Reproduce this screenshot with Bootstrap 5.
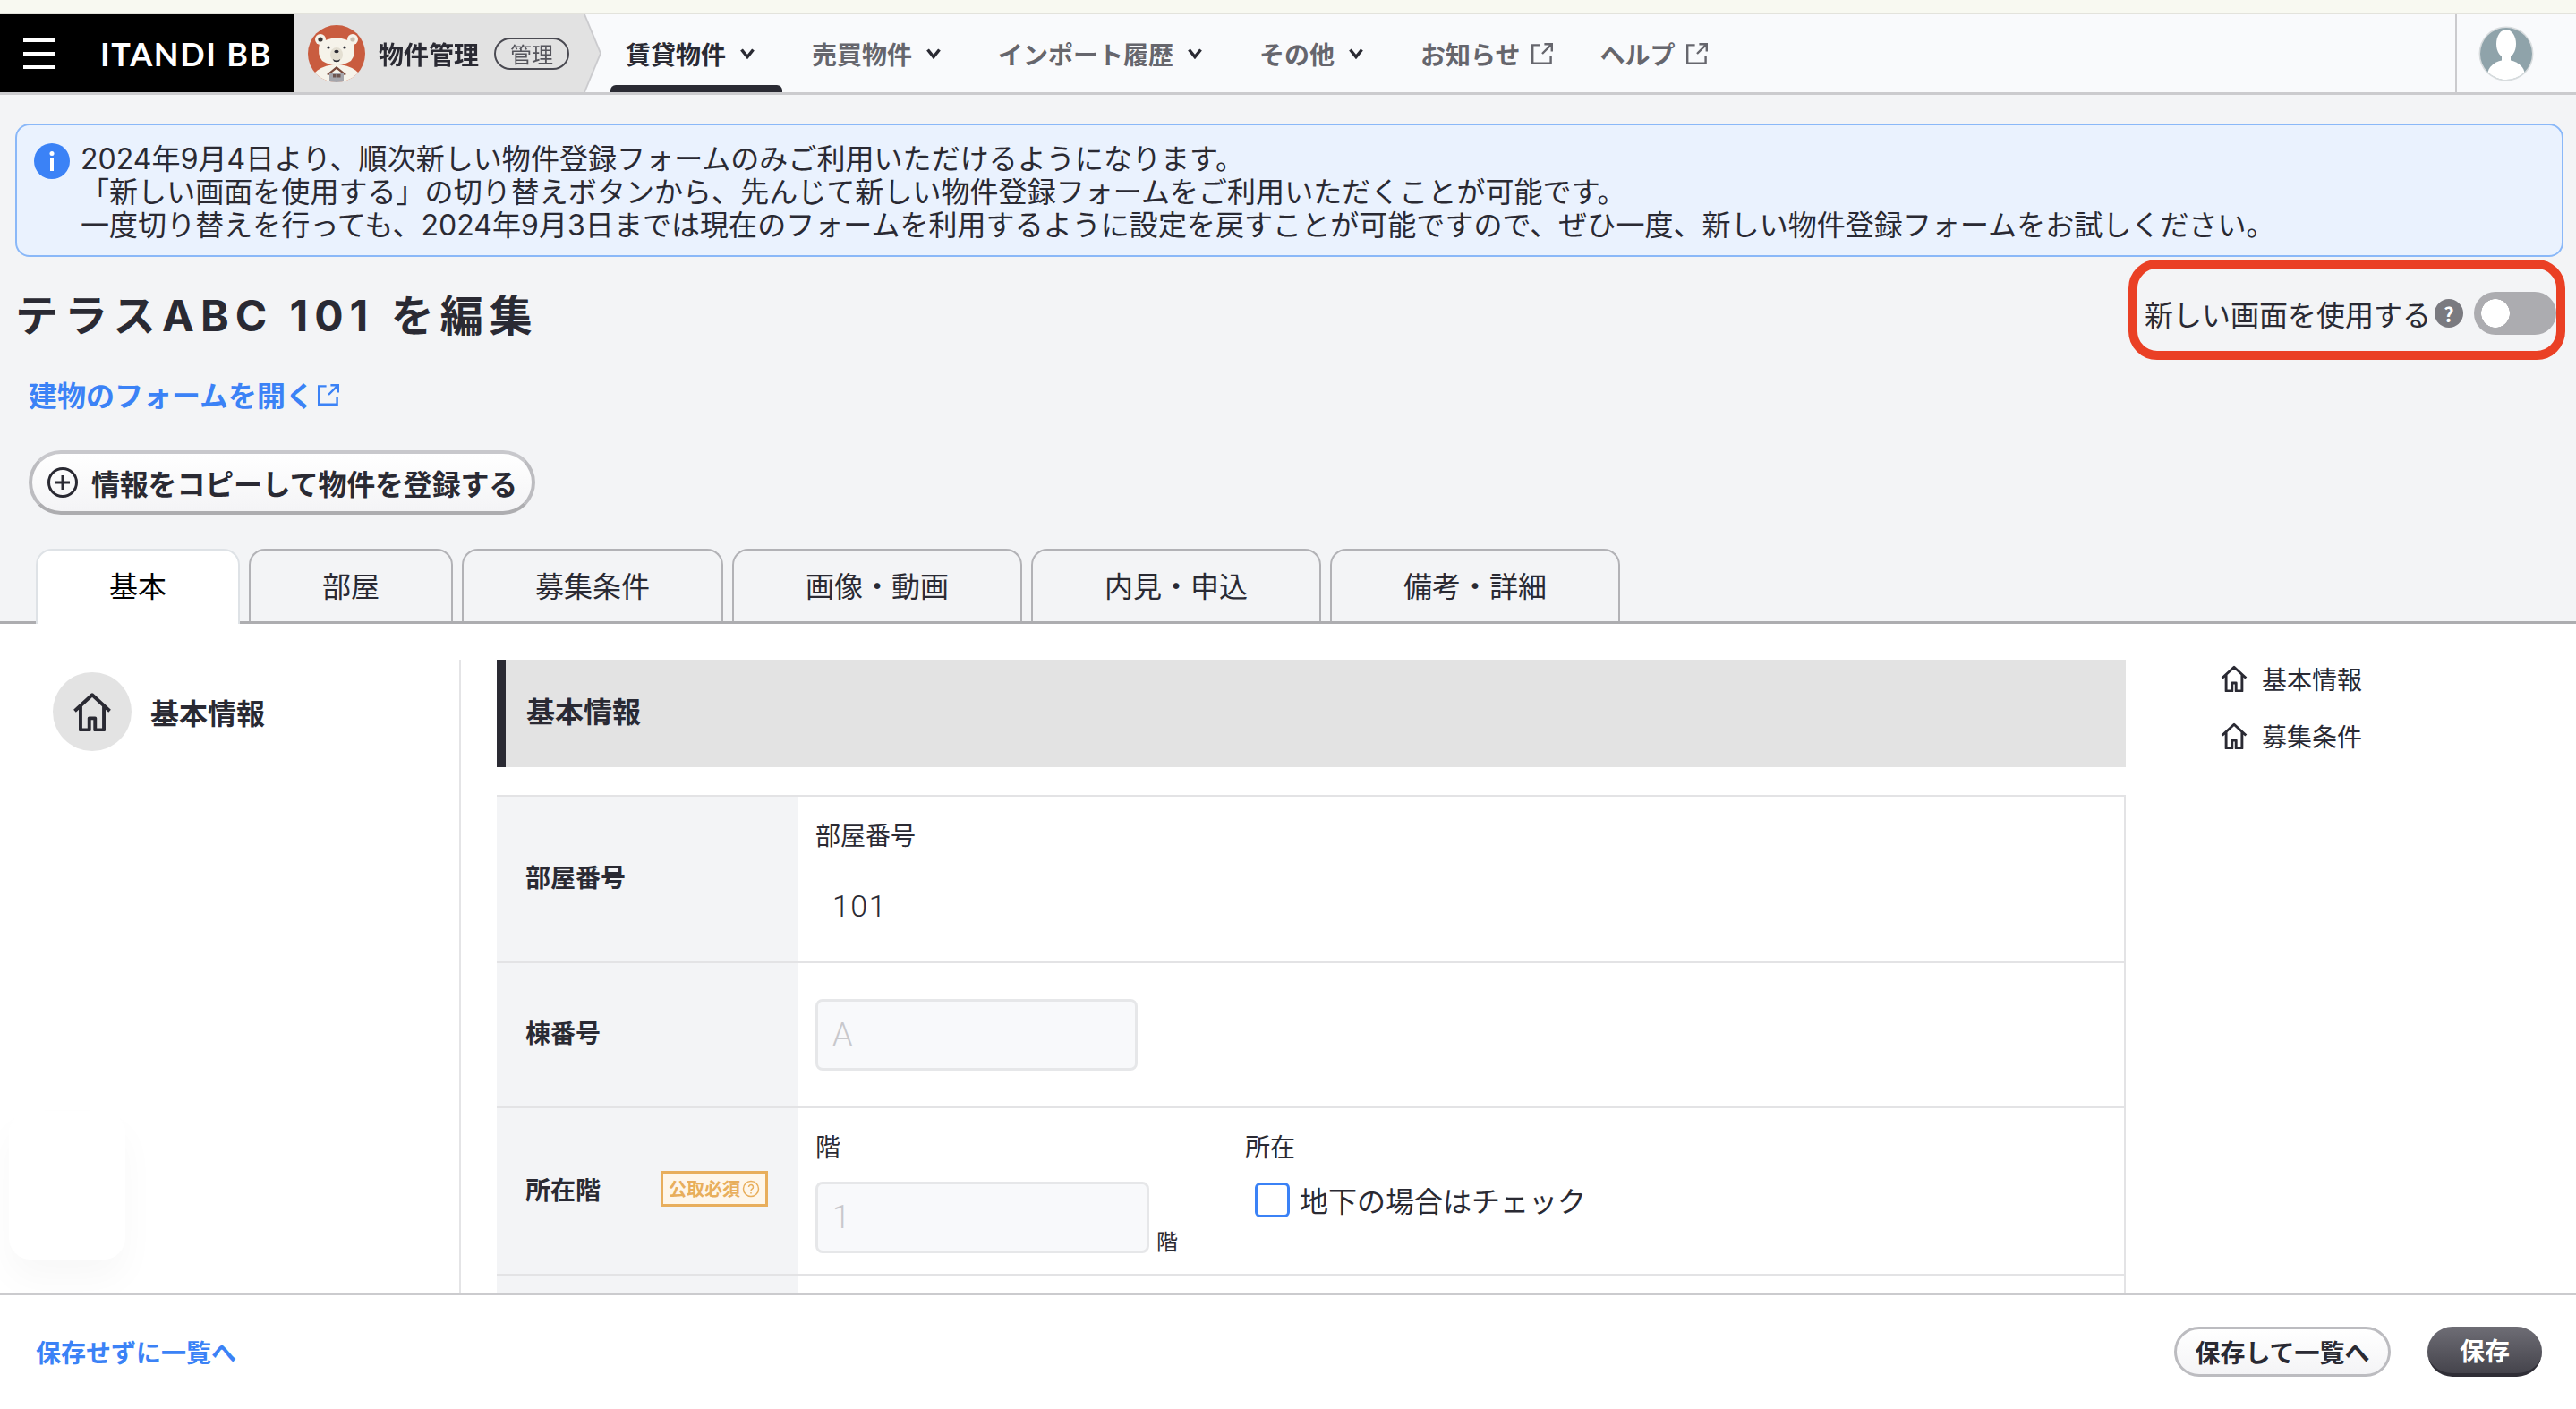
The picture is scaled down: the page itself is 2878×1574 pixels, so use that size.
<!DOCTYPE html>
<html lang="ja">
<head>
    <meta charset="UTF-8">
    <meta name="viewport" content="width=device-width, initial-scale=1.0">
    <title>テラスABC 101 を編集</title>
    <link href="https://cdn.jsdelivr.net/npm/bootstrap@5.3.0/dist/css/bootstrap.min.css" rel="stylesheet" crossorigin="anonymous">
    <style>
        /* Page shell */
        html, body { height: 100%; }
        body {
            font-family: "Noto Sans CJK JP", "Noto Sans", sans-serif;
            background-color: #f3f4f6;
            color: #2a2a33;
            font-size: 32px;
            overflow: hidden;
        }
        .top-strip { height: 16px; background-color: #f8f9f1; border-bottom: 2px solid #e3e3dc; }

        /* Global header */
        .app-nav { height: 90px; background-color: #f9fafc; border-bottom: 3px solid #cbcbce; padding: 0; flex-wrap: nowrap; align-items: stretch; justify-content: flex-start; }
        .brand-block { width: 328px; background-color: #000; color: #fff; padding-left: 26px; }
        .burger { width: 36px; margin-right: 50px; }
        .burger span { display: block; height: 4px; background-color: #fff; margin-bottom: 11px; }
        .burger span:last-child { margin-bottom: 0; }
        .brand-name { font-family: "Lato", sans-serif; font-size: 36px; font-weight: 700; letter-spacing: 1.7px; line-height: 1; margin: 0; padding: 0; color: #fff; }
        .tile-wrap { width: 342px; filter: drop-shadow(2px 0 0 #cbcbce); }
        .app-tile { height: 100%; background-color: #e2e2e2; clip-path: polygon(0 0, 324px 0, 342px 50%, 324px 100%, 0 100%); padding-left: 16px; }
        .bear { width: 64px; height: 64px; margin-right: 15px; }
        .app-name { font-size: 28px; font-weight: 700; line-height: 1; }
        .app-badge { font-size: 24px; line-height: 1; color: #55555c; border: 2px solid #4a4a52; border-radius: 18px; width: 84px; height: 36px; margin-left: 17px; }
        .main-menu { margin-left: 12px; gap: 16px; }
        .main-menu .nav-link { height: 100%; display: flex; align-items: center; font-size: 28px; font-weight: 700; color: #66666d; padding: 0 31px 0 17px; line-height: 1; position: relative; }
        .main-menu .nav-link.active { color: #2a2a33; }
        .main-menu .nav-link.active::after { content: ""; position: absolute; left: 0; right: 0; bottom: 0; height: 8px; background-color: #2a2a33; border-radius: 6px 6px 0 0; }
        .main-menu .nav-link.ext { padding-right: 20px; }
        .chev { width: 16px; height: 12px; margin-left: 16px; }
        .ext-icon { width: 24px; height: 24px; margin-left: 12px; }
        .user-area { margin-left: auto; width: 135px; border-left: 2px solid #cbcbce; padding-left: 24px; }
        .user-area svg { width: 62px; height: 64px; }

        /* Notice */
        .notice { margin: 32px 14px 0 17px; padding: 19px 30px 14px 19px; background-color: #eaf2fe; border: 2px solid #8ab8f8; border-radius: 16px; color: #2a2a33; font-family: "Inter", "Noto Sans CJK JP", sans-serif; line-height: 37px; font-size: 32px; letter-spacing: .05px; gap: 12px; height: 149px; }
        .notice svg { width: 40px; height: 40px; flex-shrink: 0; margin-top: 1px; }

        /* Title area */
        .title-row { margin-top: 40px; padding: 0 22px 0 17px; height: 56px; }
        .page-title { font-family: "Inter", "Noto Sans CJK JP", sans-serif; font-size: 48px; font-weight: 700; letter-spacing: 7px; line-height: 50px; margin: 0 0 4px; }
        .toggle-group { margin-bottom: 10px; }
        .toggle-group .label { line-height: 48px; }
        .help-dot { width: 32px; height: 32px; border-radius: 50%; background-color: #7a7a80; color: #fff; font-size: 22px; font-weight: 700; line-height: 32px; text-align: center; margin: 0 12px 0 4px; }
        .toggle-group .form-switch { padding: 0; margin: 0; min-height: 0; height: 48px; }
        .toggle-group .form-check-input { width: 92px; height: 48px; margin: 0; border: 0; background-color: #acacb0; background-size: auto; background-position: 0 0; background-image: radial-gradient(circle 16px at 24px 24px, #fff 15.5px, transparent 16px); }
        .red-frame { position: absolute; right: 12px; top: -37px; width: 488px; height: 112px; border: 10px solid #ea4025; border-radius: 32px; pointer-events: none; }
        .link-line { height: 40px; margin-top: 37px; padding-left: 32px; }
        .bldg-link { font-weight: 700; color: #3b82f6; text-decoration: none; }
        .bldg-link svg { width: 24px; height: 24px; margin-left: 4px; margin-top: -8px; }
        .copy-btn { margin: 43px 0 0 32px; height: 72px; width: 566px; border: 4px solid #bcbcc0; border-top-color: #c8c8cc; border-bottom-color: #adadb0; border-radius: 36px; background: linear-gradient(#fff, #f4f4f6); font-size: 32px; font-weight: 700; letter-spacing: -.2px; color: #2a2a33; padding: 0 0 0 16px; gap: 14px; }
        .copy-btn svg { width: 36px; height: 36px; }

        /* Tabs */
        .edit-tabs { margin-top: 38px; padding-left: 40px; gap: 10px; border-bottom: 3px solid #adadb0; flex-wrap: nowrap; }
        .edit-tabs .nav-link { height: 81px; margin-bottom: -3px; padding: 0 80px 4px; display: flex; align-items: center; font-size: 32px; line-height: 1; color: #2a2a33; background-color: #f3f4f6; border: 2px solid #b2b2b6; border-bottom: 0; border-radius: 18px 18px 0 0; }
        .edit-tabs .nav-link.active { background-color: #fff; height: 84px; padding-bottom: 7px; }

        /* Form body */
        .form-area { flex: 1 1 0; min-height: 0; background-color: #fff; padding-top: 40px; overflow: hidden; position: relative; }
        .side-menu { width: 515px; flex-shrink: 0; border-right: 2px solid #e4e4e6; padding: 14px 0 0 59px; }
        .side-menu .round { width: 88px; height: 88px; border-radius: 50%; background-color: #e3e3e3; margin-right: 21px; }
        .side-menu .round svg { width: 44px; height: 44px; }
        .side-item { font-weight: 700; font-size: 32px; }
        .float-card { position: absolute; left: 10px; top: 544px; width: 130px; height: 166px; border-radius: 24px; background-color: #fff; box-shadow: 0 22px 40px rgba(0,0,0,.03); }
        .form-main { width: 1820px; margin-left: 40px; flex-shrink: 0; }
        .section-head { height: 120px; background-color: #e3e3e3; border-left: 10px solid #2a2a33; padding: 0 0 8px 23px; font-weight: 700; font-size: 32px; margin-bottom: 31px; }
        .form-line { display: flex; border-top: 2px solid #e3e3e5; border-right: 2px solid #e3e3e5; }
        .form-line.h-room { height: 186px; }
        .form-line.h-bldg { height: 162px; }
        .form-line.h-floor { height: 187px; }
        .form-line.h-rest { height: 60px; }
        .line-label { width: 336px; flex-shrink: 0; background-color: #f3f4f6; padding: 0 33px 6px 32px; font-size: 28px; font-weight: 700; }
        .line-body { flex: 1; padding-left: 20px; }
        .field-label { font-size: 28px; line-height: 40px; }
        .pad-top { padding-top: 22px; }
        .value-plain { font-family: "Roboto", sans-serif; font-size: 34px; font-weight: 300; letter-spacing: 1.5px; line-height: 44px; padding: 0 0 0 19px; margin-top: 38px; color: #2a2a33; }
        .soft-input { height: 80px; border: 3px solid #e6e7e9; border-radius: 8px; font-family: "Roboto", sans-serif; font-size: 36px; font-weight: 300; padding: 0 16px; }
        .soft-input:disabled { background-color: #f8f9fb; }
        .soft-input::placeholder { color: #c8c8cc; }
        .w-bldg { width: 360px; }
        .w-floor { width: 373px; }
        .floor-group { width: 480px; }
        .unit { font-size: 24px; margin-left: 8px; line-height: 1; padding-bottom: 2px; }
        .req-badge { width: 120px; height: 40px; border: 3px solid #e8ae5c; background-color: #fef6ea; color: #e8ae5c; font-size: 20px; font-weight: 700; line-height: 1; gap: 2px; }
        .req-badge svg { width: 20px; height: 20px; }
        .check-row { margin: 21px 0 0 11px; gap: 11px; padding: 0; min-height: 0; }
        .check-row .form-check-input { float: none; width: 39px; height: 39px; margin: 0; border: 3px solid #3b82f6; border-radius: 6px; }
        .check-row label { line-height: 39px; }
        .right-menu { margin-left: 106px; margin-top: -11px; font-size: 28px; }
        .right-menu .item { height: 64px; gap: 16px; }
        .right-menu svg { width: 30px; height: 30px; }

        /* Footer */
        .page-foot { height: 130px; flex-shrink: 0; background-color: #fff; border-top: 3px solid #cbcbce; padding: 0 38px 2px 40px; position: relative; }
        .back-link { font-size: 28px; font-weight: 700; color: #3b82f6; text-decoration: none; }
        .foot-btn { height: 56px; border-radius: 28px; font-size: 28px; font-weight: 700; line-height: 1; padding: 0; }
        .foot-btn.light { width: 242px; border: 3px solid #bcbcc0; background: linear-gradient(#fff, #f4f4f6); color: #2a2a33; }
        .foot-btn.dark { width: 128px; margin-left: 41px; border: 0; border-bottom: 4px solid #2f2e36; background: linear-gradient(#6e6d75, #45444c); color: #fff; }
    </style>
</head>
<body class="d-flex flex-column">
    <div class="top-strip"></div>

    <!-- Global header -->
    <nav class="navbar app-nav">
        <div class="brand-block d-flex align-items-center">
            <div class="burger"><span></span><span></span><span></span></div>
            <a class="navbar-brand brand-name" href="#">ITANDI BB</a>
        </div>
        <div class="tile-wrap">
            <div class="app-tile d-flex align-items-center">
                <svg class="bear" viewBox="0 0 64 64">
                    <defs><clipPath id="bearClip"><circle cx="32" cy="32" r="32"/></clipPath></defs>
                    <g clip-path="url(#bearClip)">
                        <rect width="64" height="64" fill="#c95c3f"/>
                        <ellipse cx="32" cy="66" rx="30" ry="22" fill="#f6f3ea"/>
                        <circle cx="14" cy="16" r="6" fill="#f6f3ea"/><circle cx="14" cy="16" r="2.6" fill="#3a3433"/>
                        <circle cx="50" cy="16" r="6" fill="#f6f3ea"/><circle cx="50" cy="16" r="2.6" fill="#c9bfb2"/>
                        <path d="M13 20q19-11 38 0q3 13-3 20q-16 10-32 0q-6-7-3-20z" fill="#f6f3ea"/>
                        <circle cx="23" cy="25" r="1.6" fill="#2a2a33"/><circle cx="41" cy="25" r="1.6" fill="#2a2a33"/>
                        <ellipse cx="32" cy="33" rx="7" ry="8" fill="#e4dfd2"/>
                        <ellipse cx="32" cy="29.5" rx="2.6" ry="1.8" fill="#2a2a33"/>
                        <path d="M28 38q4 3 8 0l-1 2.500q-3 1.500-6 0z" fill="#2a2a33"/>
                        <path d="M21 55l11-9 11 9-2 1-9-7-9 7z" fill="#7a4a3c"/>
                        <rect x="24" y="54" width="16" height="12" fill="#a5a5ab"/>
                        <rect x="28" y="55" width="3.500" height="3.500" fill="#6d5550"/><rect x="33" y="55" width="3.500" height="3.500" fill="#6d5550"/>
                    </g>
                </svg>
                <span class="app-name">物件管理</span>
                <span class="app-badge d-flex align-items-center justify-content-center">管理</span>
            </div>
        </div>
        <ul class="navbar-nav flex-row main-menu">
            <li class="nav-item"><a class="nav-link active" href="#">賃貸物件<svg class="chev" viewBox="0 0 16 12"><path d="M1.500 1.500l6.500 8 6.500-8" fill="none" stroke="#2a2a33" stroke-width="3.500"/></svg></a></li>
            <li class="nav-item"><a class="nav-link" href="#">売買物件<svg class="chev" viewBox="0 0 16 12"><path d="M1.500 1.500l6.500 8 6.500-8" fill="none" stroke="#2a2a33" stroke-width="3.500"/></svg></a></li>
            <li class="nav-item"><a class="nav-link" href="#">インポート履歴<svg class="chev" viewBox="0 0 16 12"><path d="M1.500 1.500l6.500 8 6.500-8" fill="none" stroke="#2a2a33" stroke-width="3.500"/></svg></a></li>
            <li class="nav-item"><a class="nav-link" href="#">その他<svg class="chev" viewBox="0 0 16 12"><path d="M1.500 1.500l6.500 8 6.500-8" fill="none" stroke="#2a2a33" stroke-width="3.500"/></svg></a></li>
            <li class="nav-item"><a class="nav-link ext" href="#">お知らせ<svg class="ext-icon" viewBox="2 2 20 20"><path d="M10 4H3v17h17v-7M12 12L21 3M14 3h7v7" fill="none" stroke="#66666d" stroke-width="2"/></svg></a></li>
            <li class="nav-item"><a class="nav-link ext" href="#">ヘルプ<svg class="ext-icon" viewBox="2 2 20 20"><path d="M10 4H3v17h17v-7M12 12L21 3M14 3h7v7" fill="none" stroke="#66666d" stroke-width="2"/></svg></a></li>
        </ul>
        <div class="user-area d-flex align-items-center">
            <svg viewBox="0 0 62 64">
                <defs><clipPath id="userClip"><circle cx="31" cy="32" r="29"/></clipPath></defs>
                <circle cx="31" cy="32" r="30.500" fill="#d8dcde"/>
                <g clip-path="url(#userClip)">
                    <rect width="62" height="64" fill="#8fa3aa"/>
                    <ellipse cx="31" cy="21" rx="11" ry="16" fill="#fff"/>
                    <rect x="26" y="32" width="10" height="10" fill="#fff"/>
                    <ellipse cx="31" cy="56" rx="21" ry="17" fill="#fff"/>
                </g>
            </svg>
        </div>
    </nav>

    <!-- Notice -->
    <div class="alert notice d-flex" role="alert">
        <svg viewBox="0 0 40 40"><circle cx="20" cy="20" r="20" fill="#3b82f6"/><rect x="18" y="17" width="4" height="14" fill="#fff"/><circle cx="20" cy="11.500" r="2.500" fill="#fff"/></svg>
        <div>2024年9月4日より、順次新しい物件登録フォームのみご利用いただけるようになります。<br>「新しい画面を使用する」の切り替えボタンから、先んじて新しい物件登録フォームをご利用いただくことが可能です。<br>一度切り替えを行っても、2024年9月3日までは現在のフォームを利用するように設定を戻すことが可能ですので、ぜひ一度、新しい物件登録フォームをお試しください。</div>
    </div>

    <!-- Title -->
    <div class="title-row d-flex justify-content-between align-items-center position-relative">
        <h1 class="page-title">テラスABC 101 を編集</h1>
        <div class="toggle-group d-flex align-items-center">
            <span class="label">新しい画面を使用する</span>
            <span class="help-dot">?</span>
            <div class="form-check form-switch"><input class="form-check-input" type="checkbox" role="switch" aria-label="新しい画面を使用する"></div>
        </div>
        <div class="red-frame"></div>
    </div>
    <div class="link-line d-flex align-items-center"><a class="bldg-link" href="#">建物のフォームを開く<svg viewBox="2 2 20 20"><path d="M10 4H3v17h17v-7M12 12L21 3M14 3h7v7" fill="none" stroke="#3b82f6" stroke-width="2"/></svg></a></div>
    <div><button type="button" class="btn copy-btn d-flex align-items-center"><svg viewBox="0 0 36 36"><circle cx="18" cy="18" r="15.500" fill="none" stroke="#2a2a33" stroke-width="3"/><path d="M18 10v16M10 18h16" stroke="#2a2a33" stroke-width="3"/></svg>情報をコピーして物件を登録する</button></div>

    <!-- Tabs -->
    <ul class="nav nav-tabs edit-tabs">
        <li class="nav-item"><a class="nav-link active" href="#">基本</a></li>
        <li class="nav-item"><a class="nav-link" href="#">部屋</a></li>
        <li class="nav-item"><a class="nav-link" href="#">募集条件</a></li>
        <li class="nav-item"><a class="nav-link" href="#">画像・動画</a></li>
        <li class="nav-item"><a class="nav-link" href="#">内見・申込</a></li>
        <li class="nav-item"><a class="nav-link" href="#">備考・詳細</a></li>
    </ul>

    <!-- Form body -->
    <div class="form-area d-flex">
        <div class="side-menu">
            <div class="side-item d-flex align-items-center">
                <span class="round d-flex align-items-center justify-content-center">
                    <svg viewBox="2 1 26 27"><path d="M3 14L15 3l12 11M7 11v16h6v-8h4v8h6V11" fill="none" stroke="#2a2a33" stroke-width="2.400" stroke-linejoin="round"/></svg>
                </span>
                基本情報
            </div>
        </div>
        <div class="float-card"></div>
        <div class="form-main">
            <div class="section-head d-flex align-items-center">基本情報</div>

            <div class="form-line h-room">
                <div class="line-label d-flex align-items-center">部屋番号</div>
                <div class="line-body pad-top">
                    <div class="field-label">部屋番号</div>
                    <div class="value-plain">101</div>
                </div>
            </div>
            <div class="form-line h-bldg">
                <div class="line-label d-flex align-items-center">棟番号</div>
                <div class="line-body d-flex align-items-center">
                    <input class="form-control soft-input w-bldg" placeholder="A" disabled>
                </div>
            </div>
            <div class="form-line h-floor">
                <div class="line-label d-flex align-items-center justify-content-between">
                    所在階
                    <span class="req-badge d-flex align-items-center justify-content-center">公取必須<svg viewBox="0 0 20 20"><circle cx="10" cy="10" r="8.500" fill="none" stroke="#e8ae5c" stroke-width="1.500"/><path d="M7.500 8a2.500 2.500 0 1 1 3.800 2.100c-.9.600-1.300 1-1.300 2M10 14v1.500" fill="none" stroke="#e8ae5c" stroke-width="1.500"/></svg></span>
                </div>
                <div class="line-body pad-top d-flex">
                    <div class="floor-group">
                        <div class="field-label">階</div>
                        <div class="d-flex align-items-end mt-3 pt-1">
                            <input class="form-control soft-input w-floor" placeholder="1" disabled>
                            <span class="unit">階</span>
                        </div>
                    </div>
                    <div>
                        <div class="field-label">所在</div>
                        <div class="form-check d-flex align-items-center check-row">
                            <input class="form-check-input" type="checkbox" id="basement">
                            <label class="form-check-label" for="basement">地下の場合はチェック</label>
                        </div>
                    </div>
                </div>
            </div>
            <div class="form-line h-rest">
                <div class="line-label"></div>
                <div class="line-body"></div>
            </div>
        </div>
        <div class="right-menu">
            <div class="item d-flex align-items-center"><svg viewBox="2 1 26 27"><path d="M3 14L15 3l12 11M7 11v16h6v-8h4v8h6V11" fill="none" stroke="#2a2a33" stroke-width="2.600" stroke-linejoin="round"/></svg>基本情報</div>
            <div class="item d-flex align-items-center"><svg viewBox="2 1 26 27"><path d="M3 14L15 3l12 11M7 11v16h6v-8h4v8h6V11" fill="none" stroke="#2a2a33" stroke-width="2.600" stroke-linejoin="round"/></svg>募集条件</div>
        </div>
    </div>

    <!-- Footer -->
    <div class="page-foot d-flex justify-content-between align-items-center">
        <a class="back-link" href="#">保存せずに一覧へ</a>
        <div class="d-flex">
            <button type="button" class="btn foot-btn light">保存して一覧へ</button>
            <button type="button" class="btn foot-btn dark">保存</button>
        </div>
    </div>

    <script src="https://cdn.jsdelivr.net/npm/bootstrap@5.3.0/dist/js/bootstrap.bundle.min.js" crossorigin="anonymous"></script>
</body>
</html>
